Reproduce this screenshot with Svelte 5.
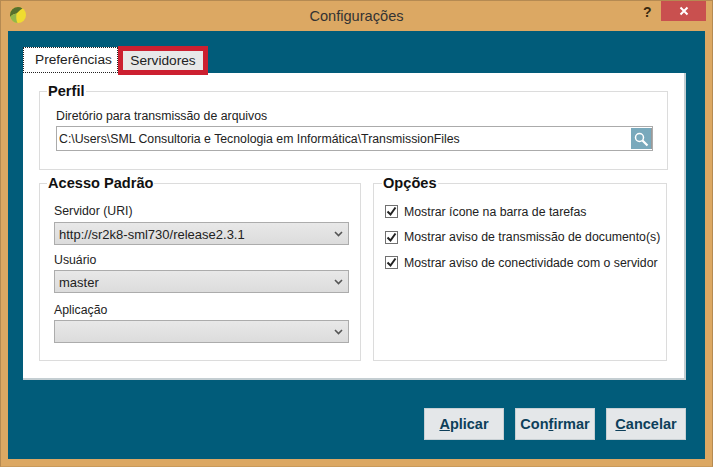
<script>
    let servidor = "http://sr2k8-sml730/release2.3.1";
    let usuario = "master";
    const opcoes = [
        "Mostrar ícone na barra de tarefas",
        "Mostrar aviso de transmissão de documento(s)",
        "Mostrar aviso de conectividade com o servidor"
    ];
</script>

<div class="window">
    <header class="titlebar">
        <svg class="logo" width="16" height="16" viewBox="0 0 16 16">
            <circle cx="8" cy="8" r="8" fill="#f0dc30" />
            <path d="M8 0a8 8 0 0 0-8 8c0 .7.100 1.400.300 2 1.700-2.500 4-3 6.200-3.500C8.500 4.500 9.500 3 12.500 1.400A8 8 0 0 0 8 0z" fill="#55702e" />
            <path d="M.300 10a8 8 0 0 0 7.200 6c-1.300-2.500-1.500-6.500-1-9.500-2.200.5-4.500 1-6.200 3.500z" fill="#93b64c" />
        </svg>
        <span class="title">Configurações</span>
        <span class="help">?</span>
        <span class="close">
            <svg width="10" height="10" viewBox="0 0 10 10"><path d="M1.500 1.500l7 7M8.500 1.500l-7 7" stroke="#fff" stroke-width="2" /></svg>
        </span>
    </header>

    <main class="client">
        <div class="tabs">
            <div class="tab active">Preferências</div>
            <div class="tab marked">Servidores</div>
        </div>
        <section class="panel">
            <fieldset class="perfil">
                <legend>Perfil</legend>
                <div class="label">Diretório para transmissão de arquivos</div>
                <div class="pathbox">
                    <span class="path">C:\Users\SML Consultoria e Tecnologia em Informática\TransmissionFiles</span>
                    <span class="search">
                        <svg width="18" height="18" viewBox="0 0 18 18" fill="none" stroke="#fff">
                            <circle cx="7.500" cy="7.500" r="4" stroke-width="1.500" />
                            <path d="M10.500 10.500l5 5" stroke-width="2.200" />
                        </svg>
                    </span>
                </div>
            </fieldset>
            <div class="columns">
                <fieldset class="acesso">
                    <legend>Acesso Padrão</legend>
                    <div class="field-label first">Servidor (URI)</div>
                    <div class="combo first">
                        <span>{servidor}</span>
                        <svg width="9" height="6" viewBox="0 0 9 6" fill="none"><path d="M1 1l3.500 3.500L8 1" stroke="#555" stroke-width="1.600" /></svg>
                    </div>
                    <div class="field-label">Usuário</div>
                    <div class="combo">
                        <span>{usuario}</span>
                        <svg width="9" height="6" viewBox="0 0 9 6" fill="none"><path d="M1 1l3.500 3.500L8 1" stroke="#555" stroke-width="1.600" /></svg>
                    </div>
                    <div class="field-label last">Aplicação</div>
                    <div class="combo">
                        <span></span>
                        <svg width="9" height="6" viewBox="0 0 9 6" fill="none"><path d="M1 1l3.500 3.500L8 1" stroke="#555" stroke-width="1.600" /></svg>
                    </div>
                </fieldset>
                <fieldset class="opcoes">
                    <legend>Opções</legend>
                    {#each opcoes as opcao}
                        <div class="check">
                            <span class="box">
                                <svg width="11" height="11" viewBox="0 0 11 11" fill="none"><path d="M1.500 5.500l3 3 5-7" stroke="#222" stroke-width="2" /></svg>
                            </span>
                            {opcao}
                        </div>
                    {/each}
                </fieldset>
            </div>
        </section>
        <footer class="buttons">
            <div class="btn"><u>A</u>plicar</div>
            <div class="btn">Con<u>f</u>irmar</div>
            <div class="btn"><u>C</u>ancelar</div>
        </footer>
    </main>
</div>

<style>
    :global(body) {
        margin: 0;
        background: #dca863;
    }
    .window {
        width: 713px;
        height: 467px;
        box-sizing: border-box;
        background: #dca863;
        border: 1px solid #b58a52;
        border-bottom-color: #c99a5b;
        display: flex;
        flex-direction: column;
        font-family: "Liberation Sans", Arial, sans-serif;
        font-size: 12.300px;
        color: #222;
        overflow: hidden;
    }
    .titlebar {
        height: 30px;
        flex: none;
        position: relative;
        display: flex;
        align-items: center;
        justify-content: center;
    }
    .logo {
        position: absolute;
        left: 9px;
        top: 6px;
    }
    .title {
        font-size: 14.600px;
        color: #333;
    }
    .help {
        position: absolute;
        left: 642px;
        top: 3px;
        font-size: 14px;
        font-weight: bold;
        color: #3a2a10;
    }
    .close {
        position: absolute;
        left: 660px;
        top: 0;
        width: 45px;
        height: 20px;
        background: #c9504f;
        display: flex;
        align-items: center;
        justify-content: center;
    }
    .client {
        flex: 1;
        margin: 0 7px 7px 7px;
        background: #015c7a;
        padding: 15px 19px 0 15px;
        display: flex;
        flex-direction: column;
    }
    .tabs {
        display: flex;
        height: 27px;
        align-items: flex-end;
    }
    .tab {
        font-size: 13.700px;
        box-sizing: border-box;
    }
    .active {
        width: 95px;
        height: 26px;
        background: #fff;
        border: 1px dotted #222;
        padding: 4px 0 0 11px;
        position: relative;
        z-index: 1;
    }
    .marked {
        width: 90px;
        height: 29px;
        background: #e8e8e8;
        border: 5px solid #cc2030;
        margin-bottom: -2px;
        text-align: center;
        line-height: 20px;
        position: relative;
        z-index: 2;
    }
    .panel {
        height: 307px;
        box-sizing: border-box;
        background: #fff;
        border-right: 2px solid #c4ced2;
        border-bottom: 2px solid #c4ced2;
        padding: 10px 16px 0 16px;
    }
    fieldset {
        margin: 0;
        border: 1px solid #dcdcdc;
        box-sizing: border-box;
        min-width: 0;
    }
    legend {
        font-size: 14.600px;
        font-weight: bold;
        color: #111;
        padding: 0 1px;
        line-height: 16px;
    }
    .perfil {
        height: 87px;
        padding: 0 14px 0 16px;
    }
    .perfil legend {
        margin-left: -9px;
    }
    .acesso legend {
        margin-left: -7px;
    }
    .opcoes legend {
        margin-left: -3px;
    }
    .label {
        margin-top: 8px;
        height: 18px;
        line-height: 18px;
    }
    .pathbox {
        margin-top: 1px;
        height: 25px;
        box-sizing: border-box;
        border: 1px solid #ababab;
        display: flex;
        align-items: center;
        justify-content: space-between;
        padding-left: 2px;
    }
    .search {
        width: 21px;
        height: 21px;
        background: #79a9bc;
        border-right: 1px solid #9a9a9a;
        box-sizing: border-box;
        display: flex;
        align-items: center;
        justify-content: center;
    }
    .columns {
        display: flex;
        gap: 12px;
        margin-top: 5px;
    }
    .acesso {
        width: 322px;
        height: 186px;
        padding: 0 11px 0 14px;
    }
    .opcoes {
        width: 294px;
        height: 186px;
        padding: 8px 0 0 11px;
    }
    .field-label {
        height: 18px;
        line-height: 18px;
        margin-top: 6px;
    }
    .field-label.first {
        margin-top: 11px;
    }
    .field-label.last {
        margin-top: 8px;
    }
    .combo {
        margin-top: 1px;
        height: 23px;
        box-sizing: border-box;
        border: 1px solid #acacac;
        background: linear-gradient(#e8e8e8, #dcdcdc);
        font-size: 13px;
        display: flex;
        align-items: center;
        justify-content: space-between;
        padding: 1px 5px 0 4px;
    }
    .combo.first {
        margin-top: 2px;
    }
    .check {
        display: flex;
        align-items: center;
        gap: 6px;
        height: 25.500px;
    }
    .box {
        width: 13px;
        height: 13px;
        box-sizing: border-box;
        border: 1px solid #707070;
        background: #fff;
        display: flex;
        align-items: center;
        justify-content: center;
    }
    .buttons {
        display: flex;
        justify-content: flex-end;
        gap: 11px;
        margin-top: 28px;
    }
    .btn {
        width: 80px;
        height: 32px;
        box-sizing: border-box;
        background: #e4e7e9;
        border: 1px solid #c8d0d4;
        color: #0d3f5a;
        font-size: 14.500px;
        font-weight: bold;
        display: flex;
        align-items: center;
        justify-content: center;
        white-space: pre;
    }
</style>
